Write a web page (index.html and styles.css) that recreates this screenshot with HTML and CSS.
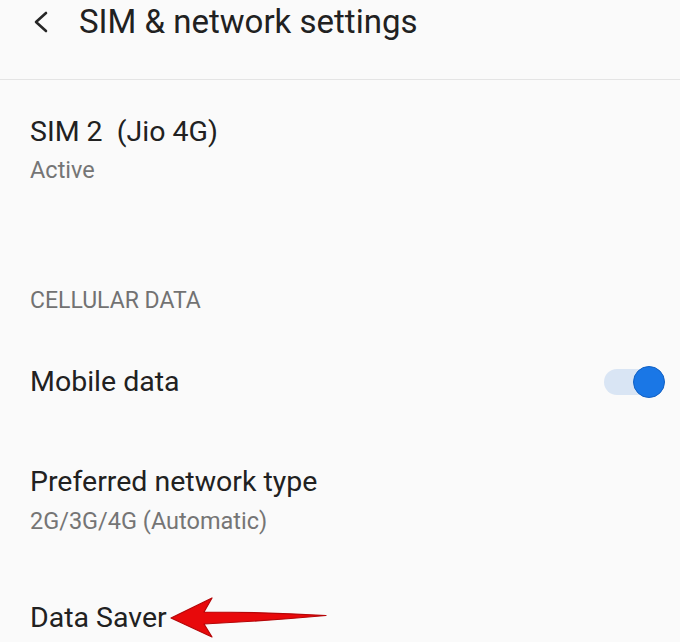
FILE: index.html
```html
<!DOCTYPE html>
<html>
<head>
    <link rel="stylesheet" href="styles.css">
</head>
<body>
    <header class="topbar">
        <svg class="back" width="16" height="22" viewBox="0 0 16 22">
            <path d="M13 2 L3 11 L13 20" fill="none" stroke="#262626" stroke-width="2.6" stroke-linecap="round" stroke-linejoin="round"/>
        </svg>
        <div class="title">SIM &amp; network settings</div>
    </header>

    <div class="sim">
        <div class="label">SIM 2&nbsp; (Jio 4G)</div>
        <div class="sub">Active</div>
    </div>

    <div class="category">CELLULAR DATA</div>

    <div class="item row">
        <div class="label">Mobile data</div>
        <div class="toggle"><span class="knob"></span></div>
    </div>

    <div class="item">
        <div class="label">Preferred network type</div>
        <div class="sub">2G/3G/4G (Automatic)</div>
    </div>

    <div class="item row start">
        <div class="label">Data Saver</div>
        <svg class="arrow" width="160" height="42" viewBox="170 597 160 42">
            <path d="M173 618 L214 598 L206 612 Q268 612 328 615.5 Q268 621 206 624 L214 637 Z" fill="#e8090b" stroke="#b50608" stroke-width="1.2" stroke-linejoin="round"/>
        </svg>
    </div>
</body>
</html>
```

FILE: styles.css
```css
body {
    margin: 0;
    background-color: #fafafa;
    color: #212121;
    font-family: Roboto, "Noto Sans", sans-serif;
}
.topbar {
    height: 79px;
    border-bottom: 1px solid #e4e4e4;
    display: flex;
    align-items: flex-start;
    padding-left: 33px;
}
.back {
    margin-top: 11px;
}
.title {
    font-size: 33px;
    line-height: 44px;
    margin-left: 30px;
}
.sim {
    padding: 34px 30px 0;
}
.label {
    font-size: 28.5px;
    line-height: 36px;
}
.sub {
    font-size: 23.5px;
    line-height: 30px;
    color: #757575;
    margin-top: 6px;
}
.sim .sub {
    margin-top: 5px;
}
.category {
    margin: 102px 30px 17px;
    font-size: 23px;
    line-height: 28px;
    color: #727272;
}
.item {
    padding: 32px 30px;
}
.row {
    display: flex;
    align-items: center;
    justify-content: space-between;
    padding-right: 18px;
}
.start {
    justify-content: flex-start;
    align-items: flex-start;
}
.toggle {
    position: relative;
    width: 58px;
    height: 26px;
    border-radius: 13px;
    background-color: #d9e5f4;
}
.knob {
    position: absolute;
    right: -3px;
    top: -3px;
    width: 30px;
    height: 30px;
    border-radius: 50%;
    background-color: #1a77e6;
    border: 1px solid #1261c4;
}
.arrow {
    margin-left: 1px;
    margin-top: -3px;
}
```
